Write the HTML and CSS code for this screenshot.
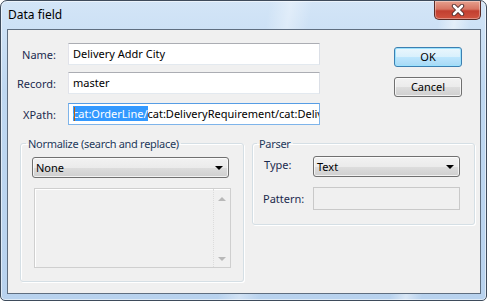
FILE: index.html
```html
<!DOCTYPE html>
<html lang="en">
<head>
  <meta charset="UTF-8" />
  <title>Data field</title>
  <link rel="stylesheet" href="styles.css">
</head>
<body>
  <div class="window">
    <!-- title bar -->
    <div class="titlebar">
      <span class="title">Data field</span>
      <div class="close-btn">
        <svg width="14" height="12" viewBox="0 0 14 12">
          <path d="M3 2 L11 10 M11 2 L3 10" stroke="#4a2a2a" stroke-width="4.4" stroke-linecap="round"/>
          <path d="M3 2 L11 10 M11 2 L3 10" stroke="#fff" stroke-width="2.6" stroke-linecap="round"/>
        </svg>
      </div>
    </div>

    <div class="client">
      <div class="top">
        <div class="fields">
          <div class="form-row">
            <label>Name:</label>
            <div class="textbox">Delivery Addr City</div>
          </div>
          <div class="form-row row-record">
            <label>Record:</label>
            <div class="textbox">master</div>
          </div>
          <div class="form-row row-xpath">
            <label>XPath:</label>
            <div class="textbox focused"><span class="caret"></span><span class="sel">cat:OrderLine/</span>cat:DeliveryRequirement/cat:Deliver</div>
          </div>
        </div>
        <div class="buttons">
          <div class="btn default">OK</div>
          <div class="btn">Cancel</div>
        </div>
      </div>

      <div class="groups">
        <fieldset class="group normalize">
          <legend>Normalize (search and replace)</legend>
          <div class="combo"><span>None</span><span class="arrow"></span></div>
          <div class="listbox">
            <div class="list-body"></div>
            <div class="scroll">
              <span class="sarrow up"></span>
              <span class="sarrow down"></span>
            </div>
          </div>
        </fieldset>

        <fieldset class="group parser">
          <legend>Parser</legend>
          <div class="parser-grid">
            <label class="lbl-type">Type:</label>
            <div class="combo"><span>Text</span><span class="arrow"></span></div>
            <label>Pattern:</label>
            <div class="textbox disabled"></div>
          </div>
        </fieldset>
      </div>
    </div>
  </div>
</body>
</html>
```

FILE: styles.css
```css
* {
  box-sizing: border-box;
}
body {
  margin: 0;
  font-family: "Noto Sans", sans-serif;
  font-size: 11px;
  background: #fff;
}
.window {
  width: 487px;
  height: 301px;
  border: 1px solid #3e4b5b;
  border-radius: 7px 7px 5px 5px;
  padding: 0 5px 6px 6px;
  display: flex;
  flex-direction: column;
  background:
    linear-gradient(100deg, transparent 50%, rgba(255,255,255,0.35) 54%, transparent 58%, transparent 82%, rgba(255,255,255,0.45) 85%, transparent 88%),
    linear-gradient(180deg, #d3e5f7 0%, #bfd8f1 30%, #b8d2ee 100%);
  box-shadow: inset 0 0 0 1px rgba(255,255,255,0.55);
}

/* title bar */
.titlebar {
  height: 28px;
  display: flex;
  align-items: flex-start;
}
.title {
  font-size: 12px;
  color: #000;
  padding: 6px 0 0 1px;
  line-height: 16px;
}
.close-btn {
  margin-left: auto;
  width: 47px;
  height: 19px;
  border: 1px solid #5b2b26;
  border-top: none;
  border-radius: 0 0 5px 5px;
  background: linear-gradient(180deg, #e6a08e 0%, #d77562 45%, #c23f30 55%, #d0533f 100%);
  box-shadow: inset 0 0 0 1px rgba(255,255,255,0.35);
  display: flex;
  align-items: center;
  justify-content: center;
}

/* client area */
.client {
  flex: 1;
  border: 1px solid #5f6e80;
  background: #f0f0f0;
}
.top {
  display: flex;
  padding-top: 13px;
}
.fields {
  width: 312px;
}
.form-row {
  display: grid;
  grid-template-columns: 48px 1fr;
  column-gap: 12px;
  align-items: center;
}
.row-record {
  margin-top: 7px;
}
.row-xpath {
  margin-top: 9px;
}
label {
  text-align: right;
  color: #1b2a4e;
}
.textbox {
  height: 22px;
  border: 1px solid #abadb3;
  border-color: #abadb3 #dbdfe6 #e3e9ef #e2e3ea;
  background: #fff;
  padding: 0 4px;
  line-height: 20px;
  white-space: nowrap;
  overflow: hidden;
  color: #000;
}
.textbox.focused {
  border-color: #569de5 #7eb4ea #7eb4ea #7eb4ea;
  position: relative;
}
.sel {
  background: #3399ff;
  color: #fff;
}
.caret {
  position: absolute;
  left: 5px;
  top: 3px;
  width: 1px;
  height: 14px;
  background: #c0600a;
}
.textbox.disabled {
  background: #f0f0f0;
  border-color: #c9c9c9;
  height: 23px;
}

/* dialog buttons */
.buttons {
  margin-left: 74px;
  margin-top: 4px;
  display: flex;
  flex-direction: column;
  gap: 10px;
}
.btn {
  width: 68px;
  height: 20px;
  border: 1px solid #707070;
  border-radius: 3px;
  background: linear-gradient(180deg, #f2f2f2 0%, #ebebeb 50%, #dddddd 51%, #cfcfcf 100%);
  box-shadow: inset 0 0 0 1px rgba(255,255,255,0.7);
  text-align: center;
  line-height: 18px;
  color: #000;
}
.btn.default {
  border-color: #3c7fb1;
  background: linear-gradient(180deg, #eaf6fd 0%, #d9f0fc 50%, #bee6fd 51%, #a7d9f5 100%);
  box-shadow: inset 0 0 0 1px #9ce2fd;
}

/* group boxes */
.groups {
  display: flex;
  align-items: flex-start;
  margin-top: 11px;
}
.group {
  margin: 0;
  min-width: 0;
  border: 1px solid #d5dfe5;
  border-radius: 3px;
  box-shadow: inset 1px 1px 0 #fff, 1px 1px 0 #fff;
  padding: 6px 12px 0 11px;
}
.group legend {
  font-size: 11px;
  letter-spacing: -0.3px;
  line-height: 15px;
  color: #1e395b;
  padding: 0 2px;
  margin-left: -6px;
}
.normalize {
  margin-left: 12px;
  width: 224px;
  height: 146px;
}
.parser {
  margin-left: 8px;
  width: 223px;
  height: 89px;
  padding-left: 10px;
  padding-top: 5px;
}
.combo {
  height: 21px;
  border: 1px solid #707070;
  border-radius: 3px;
  background: linear-gradient(180deg, #f2f2f2 0%, #ebebeb 50%, #dddddd 51%, #cfcfcf 100%);
  box-shadow: inset 0 0 0 1px rgba(255,255,255,0.7);
  display: flex;
  align-items: center;
  justify-content: space-between;
  padding: 0 5px 0 3px;
  color: #000;
}
.normalize .combo {
  width: 197px;
}
.arrow {
  width: 0;
  height: 0;
  border-left: 4px solid transparent;
  border-right: 4px solid transparent;
  border-top: 4px solid #000;
}
.listbox {
  margin: 10px 0 0 2px;
  width: 197px;
  height: 80px;
  border: 1px solid #cfcfcf;
  box-shadow: inset 1px 1px 0 #fff;
  display: flex;
}
.list-body {
  flex: 1;
}
.scroll {
  width: 17px;
  border-left: 1px dotted #dcdcdc;
  display: flex;
  flex-direction: column;
  justify-content: space-between;
  align-items: center;
  padding: 8px 0 6px;
}
.sarrow {
  width: 0;
  height: 0;
  border-left: 4px solid transparent;
  border-right: 4px solid transparent;
}
.sarrow.up {
  border-bottom: 4px solid #b8b8b8;
}
.sarrow.down {
  border-top: 4px solid #b8b8b8;
}
.parser-grid {
  display: grid;
  grid-template-columns: 50px 147px;
  row-gap: 10px;
  align-items: center;
}
.parser-grid label {
  text-align: left;
}
.parser-grid .lbl-type {
  align-self: start;
  padding: 1px 0 0 1px;
}
```
